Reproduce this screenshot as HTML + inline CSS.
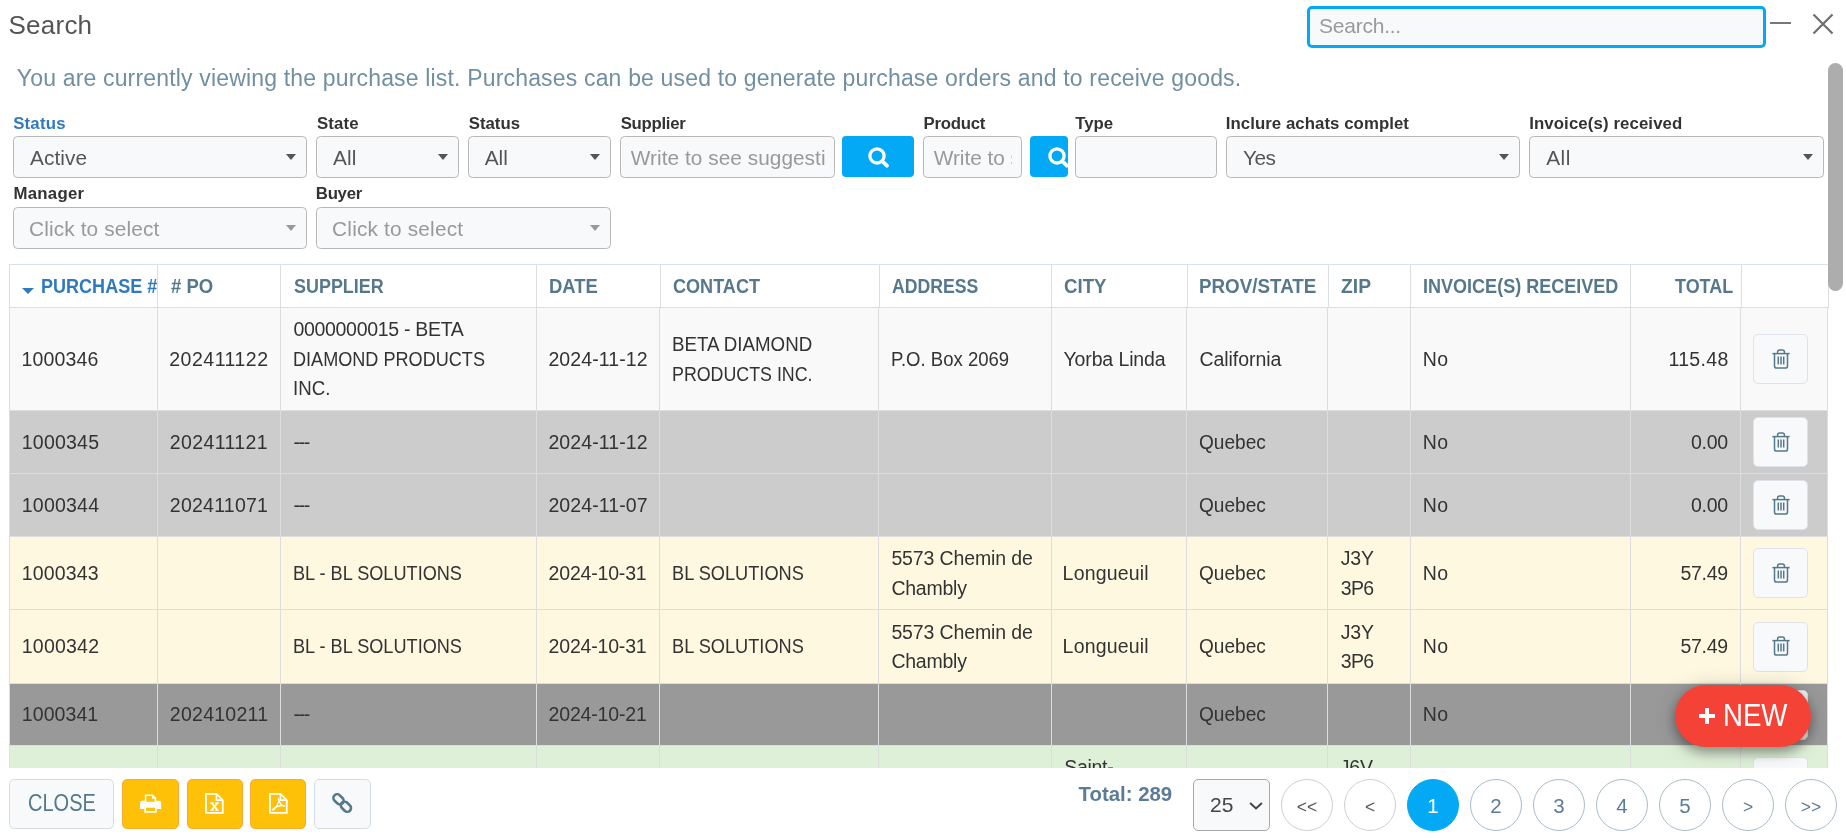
<!DOCTYPE html>
<html>
<head>
<meta charset="utf-8">
<title>Search</title>
<style>
*{box-sizing:border-box;}
html,body{margin:0;padding:0;}
body{width:1846px;height:838px;overflow:hidden;position:relative;background:#fff;will-change:transform;font-family:"Liberation Sans",sans-serif;color:#333;}
.abs{position:absolute;white-space:nowrap;}
#title{left:9px;top:10px;font-size:26px;line-height:30px;color:#555;}
#hsearch{left:1307px;top:6px;width:459px;height:42px;border:3px solid #03a9f4;border-radius:5px;background:#f8f9fa;}
#hsearch span{position:absolute;left:9px;top:5px;font-size:21px;line-height:24px;color:#9a9a9a;}
#min{left:1770px;top:22px;width:21px;height:2px;background:#777;}
#info{left:16px;top:62.8px;font-size:23px;line-height:30px;color:#7090a2;}
.lbl{font-size:16.8px;font-weight:bold;line-height:20px;color:#333;}
.sel{height:42px;border:1px solid #b8b8b8;border-radius:4.5px;background:#f8f9fa;font-size:20.8px;line-height:40px;color:#555;padding-left:16px;padding-top:1px;}
.sel.ph{color:#999;}
.sel i{position:absolute;right:10px;top:17px;width:0;height:0;border-left:5.5px solid transparent;border-right:5.5px solid transparent;border-top:6px solid #555;}
.sel.ph i{border-top-color:#999;}
.inp{height:42px;border:1px solid #b8b8b8;border-radius:4.5px;background:#f8f9fa;font-size:20.8px;line-height:40px;color:#999;padding-left:10px;padding-right:9px;padding-top:1px;overflow:hidden;}
.clip{overflow:hidden;width:100%;height:40px;}
.bbtn{background:#03a9f4;border-radius:4px;height:41px;}

#tbl{font-size:19.5px;line-height:29.6px;color:#333;}
#tbl .th,#tbl .td{position:absolute;border-left:1px solid #ddd;border-top:1px solid #ddd;padding:0 0 0 12px;display:flex;align-items:center;white-space:nowrap;}
#tbl .th{font-weight:bold;font-size:19.5px;color:#55788c;background:#fff;border-color:#dcdfe2;border-top:none;padding-top:2.2px;}
#tbl .th.sorted{color:#2f7abf;overflow:hidden;}
#tbl .r{justify-content:flex-end;padding-right:12px;padding-left:0;}
#tbl .caret{display:inline-block;width:0;height:0;border-left:6px solid transparent;border-right:6px solid transparent;border-top:6.5px solid #2f7abf;margin:9px 7px 0 0;}
#tbl .hline{position:absolute;height:1px;background:#d5e3ea;}
#tbl .vline{position:absolute;width:1px;background:#ddd;}
#tbl .t{display:block;position:relative;top:0.7px;}
#tbl .ln{display:block;}
.trash{display:flex;align-items:center;justify-content:center;width:55px;height:50px;padding-bottom:1px;border:1px solid #dde3e8;border-radius:5px;background:#f8f9fa;}

#newbtn{left:1675px;top:685px;width:136px;height:62px;border-radius:31px;background:#f44336;box-shadow:0 5px 12px rgba(0,0,0,.32),0 3px 22px rgba(0,0,0,.2);color:#fff;}
#newbtn .pl{position:absolute;left:24px;top:23px;width:16px;height:16px;}
#newbtn .pl:before{content:"";position:absolute;left:0;top:6px;width:16px;height:4.4px;background:#fff;}
#newbtn .pl:after{content:"";position:absolute;left:5.8px;top:0;width:4.4px;height:16px;background:#fff;}
#newbtn span{position:absolute;left:47.5px;top:13px;font-size:30.5px;line-height:34px;transform:scaleX(0.905);transform-origin:0 50%;}
#foot{left:0;top:768px;width:1846px;height:70px;background:#fff;}
.fb{position:absolute;top:11px;height:50px;border-radius:5px;}
.fb.y{background:#ffc107;border:1px solid #f7a93a;}
.fb.g{background:#f8f9fa;border:1px solid #d5dde2;}
.fb svg{position:absolute;}
#closet{position:absolute;left:18px;top:10px;font-size:23px;line-height:26px;color:#55788c;transform:scaleX(0.87);transform-origin:0 50%;}
#total{left:1078.5px;top:781.6px;font-size:20.4px;line-height:24px;font-weight:bold;color:#5b7c99;}
#psel{left:1193px;top:779px;width:77px;height:52px;border:1px solid #a8a8a8;border-radius:5px;background:#f8f9fa;font-size:21px;line-height:50px;color:#444;padding-left:16px;}
.pg{position:absolute;top:779px;width:52px;height:52px;border-radius:26px;border:1px solid #a9bcc8;background:#fff;text-align:center;font-size:20.5px;line-height:51px;color:#5b7c99;white-space:nowrap;}
.pg .ch{font-size:17.5px;position:relative;top:-0.5px;}
.pg.d{border-color:#d0d0d0;color:#555;}
.pg.a{background:#03a9f4;border-color:#03a9f4;color:#fff;}
#sbar{left:1828px;top:63px;width:15px;height:228px;border-radius:8px;background:#adadad;}
/*FIT*/
#l1{letter-spacing:0.20px;margin-left:0.20px;}
#l2{letter-spacing:0.18px;margin-left:0.90px;}
#l3{letter-spacing:0.02px;margin-left:0.70px;}
#l4{letter-spacing:-0.29px;margin-left:0.70px;}
#l5{letter-spacing:-0.25px;margin-left:0.50px;}
#l6{letter-spacing:-0.03px;margin-left:0.30px;}
#l7{letter-spacing:0.06px;margin-left:-0.20px;}
#l8{letter-spacing:0.11px;margin-left:0.20px;}
#l9{letter-spacing:0.25px;margin-left:0.50px;}
#l10{letter-spacing:-0.29px;margin-left:-0.20px;}
#s1{letter-spacing:0.10px;margin-left:0.00px;}
#s2{letter-spacing:0.10px;margin-left:0.10px;}
#s3{letter-spacing:0.05px;margin-left:-0.30px;}
#s4{letter-spacing:-0.60px;margin-left:0.10px;}
#s5{letter-spacing:0.50px;margin-left:0.20px;}
#s6{letter-spacing:0.14px;margin-left:-1.00px;}
#s7{letter-spacing:0.19px;margin-left:-0.90px;}
#i1{letter-spacing:0.05px;margin-left:-0.30px;}
#i2{letter-spacing:-0.03px;margin-left:-0.30px;}
#ttl{letter-spacing:0.24px;margin-left:-0.50px;}
#inf{letter-spacing:0.17px;margin-left:0.80px;}
#hs{letter-spacing:-0.23px;margin-left:-0.00px;}
/*ENDFIT*/
</style>
</head>
<body>
<div class="abs" id="title"><span id="ttl">Search</span></div>
<div class="abs" id="hsearch"><span id="hs">Search...</span></div>
<div class="abs" id="min"></div>
<svg class="abs" style="left:1811px;top:12px" width="24" height="24" viewBox="0 0 24 24"><path d="M2.5 2.5 L21.5 21.5 M21.5 2.5 L2.5 21.5" stroke="#6e6e6e" stroke-width="2.2" fill="none"/></svg>
<div class="abs" id="info"><span id="inf">You are currently viewing the purchase list. Purchases can be used to generate purchase orders and to receive goods.</span></div>

<!-- filters row 1 -->
<div class="abs lbl" style="left:13px;top:113.5px;color:#2f7abf"><span id="l1">Status</span></div>
<div class="abs sel" style="left:13px;top:136px;width:294px"><span id="s1">Active</span><i></i></div>
<div class="abs lbl" style="left:316px;top:113.5px"><span id="l2">State</span></div>
<div class="abs sel" style="left:316px;top:136px;width:143px"><span id="s2">All</span><i></i></div>
<div class="abs lbl" style="left:468px;top:113.5px"><span id="l3">Status</span></div>
<div class="abs sel" style="left:468px;top:136px;width:143px"><span id="s3">All</span><i></i></div>
<div class="abs lbl" style="left:620px;top:113.5px"><span id="l4">Supplier</span></div>
<div class="abs inp" style="left:620px;top:136px;width:215px"><div class="clip"><span id="i1">Write to see suggesti</span></div></div>
<div class="abs bbtn" style="left:842px;top:136px;width:72px"><svg style="position:absolute;left:26px;top:11px" width="22" height="21" viewBox="0 0 22 21"><g fill="none" stroke="#fff"><circle cx="9" cy="8.9" r="7.1" stroke-width="3.3"/><path d="M14.4 14.3L18.9 18.7" stroke-width="3.8" stroke-linecap="round"/></g></svg></div>
<div class="abs lbl" style="left:923px;top:113.5px"><span id="l5">Product</span></div>
<div class="abs inp" style="left:923px;top:136px;width:99px"><div class="clip"><span id="i2">Write to</span> s</div></div>
<div class="abs bbtn" style="left:1030px;top:136px;width:38px;border-radius:4px;overflow:hidden"><svg style="position:absolute;left:17.8px;top:11px" width="22" height="21" viewBox="0 0 22 21"><g fill="none" stroke="#fff"><circle cx="9" cy="8.9" r="7.1" stroke-width="3.3"/><path d="M14.4 14.3L18.9 18.7" stroke-width="3.8" stroke-linecap="round"/></g></svg></div>
<div class="abs lbl" style="left:1075px;top:113.5px"><span id="l6">Type</span></div>
<div class="abs inp" style="left:1075px;top:136px;width:142px"></div>
<div class="abs lbl" style="left:1226px;top:113.5px"><span id="l7">Inclure achats complet</span></div>
<div class="abs sel" style="left:1226px;top:136px;width:294px"><span id="s4">Yes</span><i></i></div>
<div class="abs lbl" style="left:1529px;top:113.5px"><span id="l8">Invoice(s) received</span></div>
<div class="abs sel" style="left:1529px;top:136px;width:295px"><span id="s5">All</span><i></i></div>
<!-- filters row 2 -->
<div class="abs lbl" style="left:13px;top:183.5px"><span id="l9">Manager</span></div>
<div class="abs sel ph" style="left:13px;top:207px;width:294px"><span id="s6">Click to select</span><i></i></div>
<div class="abs lbl" style="left:316px;top:183.5px"><span id="l10">Buyer</span></div>
<div class="abs sel ph" style="left:316px;top:207px;width:295px"><span id="s7">Click to select</span><i></i></div>

<!--TABLE-->
<div class="abs" id="tbl" style="left:0;top:264px;width:1846px;height:504px;overflow:hidden">
<div class="th sorted" style="left:9px;top:0;width:148px;height:43px"><i class="caret"></i><span class="ln" id="h1" style="letter-spacing:0.00px;transform:scaleX(0.9250);transform-origin:0 50%;margin-left:-0.30px;">PURCHASE #</span></div>
<div class="th" style="left:157px;top:0;width:123px;height:43px"><span class="ln" id="h2" style="letter-spacing:0.00px;transform:scaleX(0.9498);transform-origin:0 50%;margin-left:0.70px;"># PO</span></div>
<div class="th" style="left:280px;top:0;width:256px;height:43px"><span class="ln" id="h3" style="letter-spacing:0.00px;transform:scaleX(0.9199);transform-origin:0 50%;margin-left:1.00px;">SUPPLIER</span></div>
<div class="th" style="left:536px;top:0;width:124px;height:43px"><span class="ln" id="h4" style="letter-spacing:0.00px;transform:scaleX(0.9471);transform-origin:0 50%;margin-left:-0.00px;">DATE</span></div>
<div class="th" style="left:660px;top:0;width:219px;height:43px"><span class="ln" id="h5" style="letter-spacing:0.00px;transform:scaleX(0.9266);transform-origin:0 50%;margin-left:0.00px;">CONTACT</span></div>
<div class="th" style="left:879px;top:0;width:172px;height:43px"><span class="ln" id="h6" style="letter-spacing:0.00px;transform:scaleX(0.9049);transform-origin:0 50%;margin-left:0.00px;">ADDRESS</span></div>
<div class="th" style="left:1051px;top:0;width:136px;height:43px"><span class="ln" id="h7" style="letter-spacing:0.00px;transform:scaleX(0.9569);transform-origin:0 50%;margin-left:0.00px;">CITY</span></div>
<div class="th" style="left:1187px;top:0;width:141px;height:43px"><span class="ln" id="h8" style="letter-spacing:0.00px;transform:scaleX(0.9642);transform-origin:0 50%;margin-left:-1.00px;">PROV/STATE</span></div>
<div class="th" style="left:1328px;top:0;width:82px;height:43px"><span class="ln" id="h9" style="letter-spacing:0.00px;transform:scaleX(0.9899);transform-origin:0 50%;margin-left:0.20px;">ZIP</span></div>
<div class="th" style="left:1410px;top:0;width:220px;height:43px"><span class="ln" id="h10" style="letter-spacing:0.00px;transform:scaleX(0.9246);transform-origin:0 50%;margin-left:0.00px;">INVOICE(S) RECEIVED</span></div>
<div class="th r" style="left:1630px;top:0;width:111px;height:43px"><span class="ln" id="h11" style="letter-spacing:0.00px;transform:scaleX(0.9212);transform-origin:100% 50%;margin-right:-4.00px;">TOTAL</span></div>
<div class="th" style="left:1741px;top:0;width:87px;height:43px"></div>
<div class="hline" style="left:9px;top:0;width:1820px"></div>
<div class="vline" style="left:1828px;top:0;height:44px"></div>
<div class="td" style="left:9px;top:43px;width:148px;height:103px;background:#f9f9f9;border-color:#dddddd"><div class="t"><span class="ln" id="r1c1l1" style="letter-spacing:0.17px;margin-left:-0.60px;">1000346</span></div></div>
<div class="td" style="left:157px;top:43px;width:123px;height:103px;background:#f9f9f9;border-color:#dddddd"><div class="t"><span class="ln" id="r1c2l1" style="letter-spacing:0.52px;margin-left:-0.80px;">202411122</span></div></div>
<div class="td" style="left:280px;top:43px;width:256px;height:103px;background:#f9f9f9;border-color:#dddddd"><div class="t"><span class="ln" id="r1c3l1" style="letter-spacing:-0.30px;margin-left:0.40px;">0000000015 - BETA</span><span class="ln" id="r1c3l2" style="letter-spacing:0.00px;transform:scaleX(0.9276);transform-origin:0 50%;margin-left:0.20px;">DIAMOND PRODUCTS</span><span class="ln" id="r1c3l3" style="letter-spacing:0.00px;transform:scaleX(0.9574);transform-origin:0 50%;margin-left:0.20px;">INC.</span></div></div>
<div class="td" style="left:536px;top:43px;width:123px;height:103px;background:#f9f9f9;border-color:#dddddd"><div class="t"><span class="ln" id="r1c4l1" style="letter-spacing:0.09px;margin-left:-0.60px;">2024-11-12</span></div></div>
<div class="td" style="left:659px;top:43px;width:219px;height:103px;background:#f9f9f9;border-color:#dddddd"><div class="t"><span class="ln" id="r1c5l1" style="letter-spacing:0.00px;transform:scaleX(0.9613);transform-origin:0 50%;margin-left:0.20px;">BETA DIAMOND</span><span class="ln" id="r1c5l2" style="letter-spacing:0.00px;transform:scaleX(0.9136);transform-origin:0 50%;margin-left:0.20px;">PRODUCTS INC.</span></div></div>
<div class="td" style="left:878px;top:43px;width:173px;height:103px;background:#f9f9f9;border-color:#dddddd"><div class="t"><span class="ln" id="r1c6l1" style="letter-spacing:0.00px;transform:scaleX(0.9505);transform-origin:0 50%;margin-left:0.20px;">P.O. Box 2069</span></div></div>
<div class="td" style="left:1051px;top:43px;width:135px;height:103px;background:#f9f9f9;border-color:#dddddd"><div class="t"><span class="ln" id="r1c7l1" style="letter-spacing:-0.11px;margin-left:-0.60px;">Yorba Linda</span></div></div>
<div class="td" style="left:1186px;top:43px;width:141px;height:103px;background:#f9f9f9;border-color:#dddddd"><div class="t"><span class="ln" id="r1c8l1" style="letter-spacing:-0.08px;margin-left:0.60px;">California</span></div></div>
<div class="td" style="left:1327px;top:43px;width:83px;height:103px;background:#f9f9f9;border-color:#dddddd"></div>
<div class="td" style="left:1410px;top:43px;width:220px;height:103px;background:#f9f9f9;border-color:#dddddd"><div class="t"><span class="ln" id="r1c10l1" style="letter-spacing:0.40px;margin-left:-0.30px;">No</span></div></div>
<div class="td r" style="left:1630px;top:43px;width:110px;height:103px;background:#f9f9f9;border-color:#dddddd"><div class="t"><span class="ln" id="r1c11l1" style="letter-spacing:0.36px;margin-right:-0.76px;">115.48</span></div></div>
<div class="td" style="left:1740px;top:43px;width:88px;height:103px;background:#f9f9f9;border-color:#dddddd"><b class="trash"><svg width="18" height="20" viewBox="0 0 18 20"><g fill="none" stroke="#55788c" stroke-width="1.5"><path d="M0.4 4.6H17.6"/><path d="M5.6 4.4V3Q5.6 1 7.6 1H10.4Q12.4 1 12.4 3V4.4"/><path d="M2.5 4.8V17Q2.5 19.1 4.6 19.1H13.4Q15.5 19.1 15.5 17V4.8"/><path d="M6.3 7.6V15.6M9 7.6V15.6M11.7 7.6V15.6"/></g></svg></b></div>
<div class="vline" style="left:1827px;top:43px;height:103px;background:#dddddd"></div>
<div class="td" style="left:9px;top:146px;width:148px;height:63px;background:#cccccc;border-color:#dddddd"><div class="t"><span class="ln" id="r2c1l1" style="letter-spacing:0.21px;margin-left:-0.20px;">1000345</span></div></div>
<div class="td" style="left:157px;top:146px;width:123px;height:63px;background:#cccccc;border-color:#dddddd"><div class="t"><span class="ln" id="r2c2l1" style="letter-spacing:0.39px;margin-left:-0.20px;">202411121</span></div></div>
<div class="td" style="left:280px;top:146px;width:256px;height:63px;background:#cccccc;border-color:#dddddd"><div class="t"><span class="ln" id="r2c3l1" style="letter-spacing:-1.30px;margin-left:0.40px;">---</span></div></div>
<div class="td" style="left:536px;top:146px;width:123px;height:63px;background:#cccccc;border-color:#dddddd"><div class="t"><span class="ln" id="r2c4l1" style="letter-spacing:0.09px;margin-left:-0.60px;">2024-11-12</span></div></div>
<div class="td" style="left:659px;top:146px;width:219px;height:63px;background:#cccccc;border-color:#dddddd"></div>
<div class="td" style="left:878px;top:146px;width:173px;height:63px;background:#cccccc;border-color:#dddddd"></div>
<div class="td" style="left:1051px;top:146px;width:135px;height:63px;background:#cccccc;border-color:#dddddd"></div>
<div class="td" style="left:1186px;top:146px;width:141px;height:63px;background:#cccccc;border-color:#dddddd"><div class="t"><span class="ln" id="r2c8l1" style="letter-spacing:0.00px;transform:scaleX(0.9781);transform-origin:0 50%;margin-left:0.30px;">Quebec</span></div></div>
<div class="td" style="left:1327px;top:146px;width:83px;height:63px;background:#cccccc;border-color:#dddddd"></div>
<div class="td" style="left:1410px;top:146px;width:220px;height:63px;background:#cccccc;border-color:#dddddd"><div class="t"><span class="ln" id="r2c10l1" style="letter-spacing:0.40px;margin-left:-0.30px;">No</span></div></div>
<div class="td r" style="left:1630px;top:146px;width:110px;height:63px;background:#cccccc;border-color:#dddddd"><div class="t"><span class="ln" id="r2c11l1" style="letter-spacing:-0.33px;margin-right:0.33px;">0.00</span></div></div>
<div class="td" style="left:1740px;top:146px;width:88px;height:63px;background:#cccccc;border-color:#dddddd"><b class="trash"><svg width="18" height="20" viewBox="0 0 18 20"><g fill="none" stroke="#55788c" stroke-width="1.5"><path d="M0.4 4.6H17.6"/><path d="M5.6 4.4V3Q5.6 1 7.6 1H10.4Q12.4 1 12.4 3V4.4"/><path d="M2.5 4.8V17Q2.5 19.1 4.6 19.1H13.4Q15.5 19.1 15.5 17V4.8"/><path d="M6.3 7.6V15.6M9 7.6V15.6M11.7 7.6V15.6"/></g></svg></b></div>
<div class="vline" style="left:1827px;top:146px;height:63px;background:#dddddd"></div>
<div class="td" style="left:9px;top:209px;width:148px;height:63px;background:#cccccc;border-color:#dddddd"><div class="t"><span class="ln" id="r3c1l1" style="letter-spacing:0.21px;margin-left:-0.20px;">1000344</span></div></div>
<div class="td" style="left:157px;top:209px;width:123px;height:63px;background:#cccccc;border-color:#dddddd"><div class="t"><span class="ln" id="r3c2l1" style="letter-spacing:0.24px;margin-left:-0.20px;">202411071</span></div></div>
<div class="td" style="left:280px;top:209px;width:256px;height:63px;background:#cccccc;border-color:#dddddd"><div class="t"><span class="ln" id="r3c3l1" style="letter-spacing:-1.30px;margin-left:0.40px;">---</span></div></div>
<div class="td" style="left:536px;top:209px;width:123px;height:63px;background:#cccccc;border-color:#dddddd"><div class="t"><span class="ln" id="r3c4l1" style="letter-spacing:0.09px;margin-left:-0.60px;">2024-11-07</span></div></div>
<div class="td" style="left:659px;top:209px;width:219px;height:63px;background:#cccccc;border-color:#dddddd"></div>
<div class="td" style="left:878px;top:209px;width:173px;height:63px;background:#cccccc;border-color:#dddddd"></div>
<div class="td" style="left:1051px;top:209px;width:135px;height:63px;background:#cccccc;border-color:#dddddd"></div>
<div class="td" style="left:1186px;top:209px;width:141px;height:63px;background:#cccccc;border-color:#dddddd"><div class="t"><span class="ln" id="r3c8l1" style="letter-spacing:0.00px;transform:scaleX(0.9781);transform-origin:0 50%;margin-left:0.30px;">Quebec</span></div></div>
<div class="td" style="left:1327px;top:209px;width:83px;height:63px;background:#cccccc;border-color:#dddddd"></div>
<div class="td" style="left:1410px;top:209px;width:220px;height:63px;background:#cccccc;border-color:#dddddd"><div class="t"><span class="ln" id="r3c10l1" style="letter-spacing:0.40px;margin-left:-0.30px;">No</span></div></div>
<div class="td r" style="left:1630px;top:209px;width:110px;height:63px;background:#cccccc;border-color:#dddddd"><div class="t"><span class="ln" id="r3c11l1" style="letter-spacing:-0.33px;margin-right:0.33px;">0.00</span></div></div>
<div class="td" style="left:1740px;top:209px;width:88px;height:63px;background:#cccccc;border-color:#dddddd"><b class="trash"><svg width="18" height="20" viewBox="0 0 18 20"><g fill="none" stroke="#55788c" stroke-width="1.5"><path d="M0.4 4.6H17.6"/><path d="M5.6 4.4V3Q5.6 1 7.6 1H10.4Q12.4 1 12.4 3V4.4"/><path d="M2.5 4.8V17Q2.5 19.1 4.6 19.1H13.4Q15.5 19.1 15.5 17V4.8"/><path d="M6.3 7.6V15.6M9 7.6V15.6M11.7 7.6V15.6"/></g></svg></b></div>
<div class="vline" style="left:1827px;top:209px;height:63px;background:#dddddd"></div>
<div class="td" style="left:9px;top:272px;width:148px;height:73px;background:#fff8e1;border-color:#dddddd"><div class="t"><span class="ln" id="r4c1l1" style="letter-spacing:0.15px;margin-left:-0.20px;">1000343</span></div></div>
<div class="td" style="left:157px;top:272px;width:123px;height:73px;background:#fff8e1;border-color:#dddddd"></div>
<div class="td" style="left:280px;top:272px;width:256px;height:73px;background:#fff8e1;border-color:#dddddd"><div class="t"><span class="ln" id="r4c3l1" style="letter-spacing:0.00px;transform:scaleX(0.9300);transform-origin:0 50%;margin-left:-0.20px;">BL - BL SOLUTIONS</span></div></div>
<div class="td" style="left:536px;top:272px;width:123px;height:73px;background:#fff8e1;border-color:#dddddd"><div class="t"><span class="ln" id="r4c4l1" style="letter-spacing:-0.19px;margin-left:-0.40px;">2024-10-31</span></div></div>
<div class="td" style="left:659px;top:272px;width:219px;height:73px;background:#fff8e1;border-color:#dddddd"><div class="t"><span class="ln" id="r4c5l1" style="letter-spacing:0.00px;transform:scaleX(0.9335);transform-origin:0 50%;margin-left:-0.40px;">BL SOLUTIONS</span></div></div>
<div class="td" style="left:878px;top:272px;width:173px;height:73px;background:#fff8e1;border-color:#dddddd"><div class="t"><span class="ln" id="r4c6l1" style="letter-spacing:-0.13px;margin-left:0.40px;">5573 Chemin de</span><span class="ln" id="r4c6l2" style="letter-spacing:-0.23px;margin-left:0.40px;">Chambly</span></div></div>
<div class="td" style="left:1051px;top:272px;width:135px;height:73px;background:#fff8e1;border-color:#dddddd"><div class="t"><span class="ln" id="r4c7l1" style="letter-spacing:0.18px;margin-left:-1.40px;">Longueuil</span></div></div>
<div class="td" style="left:1186px;top:272px;width:141px;height:73px;background:#fff8e1;border-color:#dddddd"><div class="t"><span class="ln" id="r4c8l1" style="letter-spacing:0.00px;transform:scaleX(0.9776);transform-origin:0 50%;margin-left:0.30px;">Quebec</span></div></div>
<div class="td" style="left:1327px;top:272px;width:83px;height:73px;background:#fff8e1;border-color:#dddddd"><div class="t"><span class="ln" id="r4c9l1" style="letter-spacing:-0.20px;margin-left:0.80px;">J3Y</span><span class="ln" id="r4c9l2" style="letter-spacing:-0.70px;margin-left:0.80px;">3P6</span></div></div>
<div class="td" style="left:1410px;top:272px;width:220px;height:73px;background:#fff8e1;border-color:#dddddd"><div class="t"><span class="ln" id="r4c10l1" style="letter-spacing:0.40px;margin-left:-0.30px;">No</span></div></div>
<div class="td r" style="left:1630px;top:272px;width:110px;height:73px;background:#fff8e1;border-color:#dddddd"><div class="t"><span class="ln" id="r4c11l1" style="letter-spacing:-0.25px;margin-right:0.05px;">57.49</span></div></div>
<div class="td" style="left:1740px;top:272px;width:88px;height:73px;background:#fff8e1;border-color:#dddddd"><b class="trash"><svg width="18" height="20" viewBox="0 0 18 20"><g fill="none" stroke="#55788c" stroke-width="1.5"><path d="M0.4 4.6H17.6"/><path d="M5.6 4.4V3Q5.6 1 7.6 1H10.4Q12.4 1 12.4 3V4.4"/><path d="M2.5 4.8V17Q2.5 19.1 4.6 19.1H13.4Q15.5 19.1 15.5 17V4.8"/><path d="M6.3 7.6V15.6M9 7.6V15.6M11.7 7.6V15.6"/></g></svg></b></div>
<div class="vline" style="left:1827px;top:272px;height:73px;background:#dddddd"></div>
<div class="td" style="left:9px;top:345px;width:148px;height:74px;background:#fff8e1;border-color:#dddddd"><div class="t"><span class="ln" id="r5c1l1" style="letter-spacing:0.21px;margin-left:-0.20px;">1000342</span></div></div>
<div class="td" style="left:157px;top:345px;width:123px;height:74px;background:#fff8e1;border-color:#dddddd"></div>
<div class="td" style="left:280px;top:345px;width:256px;height:74px;background:#fff8e1;border-color:#dddddd"><div class="t"><span class="ln" id="r5c3l1" style="letter-spacing:0.00px;transform:scaleX(0.9300);transform-origin:0 50%;margin-left:-0.20px;">BL - BL SOLUTIONS</span></div></div>
<div class="td" style="left:536px;top:345px;width:123px;height:74px;background:#fff8e1;border-color:#dddddd"><div class="t"><span class="ln" id="r5c4l1" style="letter-spacing:-0.19px;margin-left:-0.40px;">2024-10-31</span></div></div>
<div class="td" style="left:659px;top:345px;width:219px;height:74px;background:#fff8e1;border-color:#dddddd"><div class="t"><span class="ln" id="r5c5l1" style="letter-spacing:0.00px;transform:scaleX(0.9335);transform-origin:0 50%;margin-left:-0.40px;">BL SOLUTIONS</span></div></div>
<div class="td" style="left:878px;top:345px;width:173px;height:74px;background:#fff8e1;border-color:#dddddd"><div class="t"><span class="ln" id="r5c6l1" style="letter-spacing:-0.13px;margin-left:0.40px;">5573 Chemin de</span><span class="ln" id="r5c6l2" style="letter-spacing:-0.23px;margin-left:0.40px;">Chambly</span></div></div>
<div class="td" style="left:1051px;top:345px;width:135px;height:74px;background:#fff8e1;border-color:#dddddd"><div class="t"><span class="ln" id="r5c7l1" style="letter-spacing:0.18px;margin-left:-1.40px;">Longueuil</span></div></div>
<div class="td" style="left:1186px;top:345px;width:141px;height:74px;background:#fff8e1;border-color:#dddddd"><div class="t"><span class="ln" id="r5c8l1" style="letter-spacing:0.00px;transform:scaleX(0.9776);transform-origin:0 50%;margin-left:0.30px;">Quebec</span></div></div>
<div class="td" style="left:1327px;top:345px;width:83px;height:74px;background:#fff8e1;border-color:#dddddd"><div class="t"><span class="ln" id="r5c9l1" style="letter-spacing:-0.20px;margin-left:0.80px;">J3Y</span><span class="ln" id="r5c9l2" style="letter-spacing:-0.70px;margin-left:0.80px;">3P6</span></div></div>
<div class="td" style="left:1410px;top:345px;width:220px;height:74px;background:#fff8e1;border-color:#dddddd"><div class="t"><span class="ln" id="r5c10l1" style="letter-spacing:0.40px;margin-left:-0.30px;">No</span></div></div>
<div class="td r" style="left:1630px;top:345px;width:110px;height:74px;background:#fff8e1;border-color:#dddddd"><div class="t"><span class="ln" id="r5c11l1" style="letter-spacing:-0.25px;margin-right:0.05px;">57.49</span></div></div>
<div class="td" style="left:1740px;top:345px;width:88px;height:74px;background:#fff8e1;border-color:#dddddd"><b class="trash"><svg width="18" height="20" viewBox="0 0 18 20"><g fill="none" stroke="#55788c" stroke-width="1.5"><path d="M0.4 4.6H17.6"/><path d="M5.6 4.4V3Q5.6 1 7.6 1H10.4Q12.4 1 12.4 3V4.4"/><path d="M2.5 4.8V17Q2.5 19.1 4.6 19.1H13.4Q15.5 19.1 15.5 17V4.8"/><path d="M6.3 7.6V15.6M9 7.6V15.6M11.7 7.6V15.6"/></g></svg></b></div>
<div class="vline" style="left:1827px;top:345px;height:74px;background:#dddddd"></div>
<div class="td" style="left:9px;top:419px;width:148px;height:62px;background:#999999;border-color:#dddddd"><div class="t"><span class="ln" id="r6c1l1" style="letter-spacing:0.08px;margin-left:-0.20px;">1000341</span></div></div>
<div class="td" style="left:157px;top:419px;width:123px;height:62px;background:#999999;border-color:#dddddd"><div class="t"><span class="ln" id="r6c2l1" style="letter-spacing:0.26px;margin-left:-0.20px;">202410211</span></div></div>
<div class="td" style="left:280px;top:419px;width:256px;height:62px;background:#999999;border-color:#dddddd"><div class="t"><span class="ln" id="r6c3l1" style="letter-spacing:-1.30px;margin-left:0.40px;">---</span></div></div>
<div class="td" style="left:536px;top:419px;width:123px;height:62px;background:#999999;border-color:#dddddd"><div class="t"><span class="ln" id="r6c4l1" style="letter-spacing:-0.18px;margin-left:-0.40px;">2024-10-21</span></div></div>
<div class="td" style="left:659px;top:419px;width:219px;height:62px;background:#999999;border-color:#dddddd"></div>
<div class="td" style="left:878px;top:419px;width:173px;height:62px;background:#999999;border-color:#dddddd"></div>
<div class="td" style="left:1051px;top:419px;width:135px;height:62px;background:#999999;border-color:#dddddd"></div>
<div class="td" style="left:1186px;top:419px;width:141px;height:62px;background:#999999;border-color:#dddddd"><div class="t"><span class="ln" id="r6c8l1" style="letter-spacing:0.00px;transform:scaleX(0.9781);transform-origin:0 50%;margin-left:0.30px;">Quebec</span></div></div>
<div class="td" style="left:1327px;top:419px;width:83px;height:62px;background:#999999;border-color:#dddddd"></div>
<div class="td" style="left:1410px;top:419px;width:220px;height:62px;background:#999999;border-color:#dddddd"><div class="t"><span class="ln" id="r6c10l1" style="letter-spacing:0.40px;margin-left:-0.30px;">No</span></div></div>
<div class="td r" style="left:1630px;top:419px;width:110px;height:62px;background:#999999;border-color:#dddddd"></div>
<div class="td" style="left:1740px;top:419px;width:88px;height:62px;background:#999999;border-color:#dddddd"><b class="trash"><svg width="18" height="20" viewBox="0 0 18 20"><g fill="none" stroke="#55788c" stroke-width="1.5"><path d="M0.4 4.6H17.6"/><path d="M5.6 4.4V3Q5.6 1 7.6 1H10.4Q12.4 1 12.4 3V4.4"/><path d="M2.5 4.8V17Q2.5 19.1 4.6 19.1H13.4Q15.5 19.1 15.5 17V4.8"/><path d="M6.3 7.6V15.6M9 7.6V15.6M11.7 7.6V15.6"/></g></svg></b></div>
<div class="vline" style="left:1827px;top:419px;height:62px;background:#dddddd"></div>
<div class="td" style="left:9px;top:481px;width:148px;height:73px;background:#dff0d8;border-color:#dddddd"></div>
<div class="td" style="left:157px;top:481px;width:123px;height:73px;background:#dff0d8;border-color:#dddddd"></div>
<div class="td" style="left:280px;top:481px;width:256px;height:73px;background:#dff0d8;border-color:#dddddd"></div>
<div class="td" style="left:536px;top:481px;width:123px;height:73px;background:#dff0d8;border-color:#dddddd"></div>
<div class="td" style="left:659px;top:481px;width:219px;height:73px;background:#dff0d8;border-color:#dddddd"></div>
<div class="td" style="left:878px;top:481px;width:173px;height:73px;background:#dff0d8;border-color:#dddddd"></div>
<div class="td" style="left:1051px;top:481px;width:135px;height:73px;background:#dff0d8;border-color:#dddddd"><div class="t"><span class="ln" id="r7c7l1" style="letter-spacing:-0.30px;margin-left:0.20px;">Saint-</span><span class="ln" id="r7c7l2" style="">Lin</span></div></div>
<div class="td" style="left:1186px;top:481px;width:141px;height:73px;background:#dff0d8;border-color:#dddddd"></div>
<div class="td" style="left:1327px;top:481px;width:83px;height:73px;background:#dff0d8;border-color:#dddddd"><div class="t"><span class="ln" id="r7c9l1" style="letter-spacing:-0.20px;margin-left:-0.20px;">J6V</span><span class="ln" id="r7c9l2" style="">1A1</span></div></div>
<div class="td" style="left:1410px;top:481px;width:220px;height:73px;background:#dff0d8;border-color:#dddddd"></div>
<div class="td r" style="left:1630px;top:481px;width:110px;height:73px;background:#dff0d8;border-color:#dddddd"></div>
<div class="td" style="left:1740px;top:481px;width:88px;height:73px;background:#dff0d8;border-color:#dddddd"><b class="trash"><svg width="18" height="20" viewBox="0 0 18 20"><g fill="none" stroke="#55788c" stroke-width="1.5"><path d="M0.4 4.6H17.6"/><path d="M5.6 4.4V3Q5.6 1 7.6 1H10.4Q12.4 1 12.4 3V4.4"/><path d="M2.5 4.8V17Q2.5 19.1 4.6 19.1H13.4Q15.5 19.1 15.5 17V4.8"/><path d="M6.3 7.6V15.6M9 7.6V15.6M11.7 7.6V15.6"/></g></svg></b></div>
<div class="vline" style="left:1827px;top:481px;height:73px;background:#dddddd"></div>
</div>
<!--/TABLE-->
<!--FOOTER-->
<div class="abs" id="foot">
<div class="fb g" style="left:9px;width:105px"><span id="closet">CLOSE</span></div>
<div class="fb y" style="left:122px;width:57px"><svg style="left:17.4px;top:14.3px" width="21.2" height="19.3" viewBox="0 0 22 20"><g fill="#fff"><path d="M5 0.5H13.2L16.8 4V8H5Z"/><path d="M2.2 7H19.8Q22 7 22 9.2V15.5H17.5V12.5H4.5V15.5H0V9.2Q0 7 2.2 7Z"/><path d="M4.5 12.5H17.5V19.5H4.5Z M6.3 14.3V17.7H15.7V14.3Z" fill-rule="evenodd"/><path d="M6.6 2.1H12.4V5H15.2V8H6.6Z" fill="#ffc107"/></g></svg></div>
<div class="fb y" style="left:187px;width:56px"><svg style="left:17.4px;top:12.9px" width="19" height="20.9" viewBox="0 0 20 22"><g><path d="M1 1H12L18.7 7.5V21H1Z" fill="none" stroke="#fff" stroke-width="1.9"/><path d="M12 1V7.5H18.7" fill="none" stroke="#fff" stroke-width="1.6"/><path d="M5.5 10.5H9.2M10.8 10.5H14.5M5.5 18H9.2M10.8 18H14.5" stroke="#fff" stroke-width="1.4"/><path d="M7 10.5L13 18M13 10.5L7 18" stroke="#fff" stroke-width="2"/></g></svg></div>
<div class="fb y" style="left:250px;width:56px"><svg style="left:18px;top:12.9px" width="19" height="20.9" viewBox="0 0 20 22"><g><path d="M1 1H12L18.7 7.5V21H1Z" fill="none" stroke="#fff" stroke-width="1.9"/><path d="M12 1V7.5H18.7" fill="none" stroke="#fff" stroke-width="1.6"/><path d="M9.8 5.5Q10.5 10 13 12.5Q15 14.2 17 13.6M10.3 9Q8.5 14.5 4.8 17.8Q3.6 18.4 4 17.2Q6 14.5 14.5 13" fill="none" stroke="#fff" stroke-width="1.5"/></g></svg></div>
<div class="fb g" style="left:314px;width:57px"><svg style="left:17.4px;top:12.8px" width="21" height="21" viewBox="0 0 22 22"><g fill="none" stroke="#55788c" stroke-width="2.7"><rect x="-5.9" y="-3.9" width="11.8" height="7.8" rx="3.9" transform="translate(6.8 6.6) rotate(45)"/><rect x="-5.9" y="-3.9" width="11.8" height="7.8" rx="3.9" transform="translate(14.6 14.4) rotate(45)"/></g></svg></div>
</div>
<div class="abs" id="total">Total: 289</div>
<div class="abs" id="psel">25<svg style="position:absolute;left:55px;top:22px" width="14" height="8" viewBox="0 0 14 8"><path d="M1.1 1.1L7 6.5L12.9 1.1" fill="none" stroke="#444" stroke-width="2"/></svg></div>
<div class="pg d" style="left:1281px"><span class="ch">&lt;&lt;</span></div>
<div class="pg d" style="left:1344px"><span class="ch">&lt;</span></div>
<div class="pg a" style="left:1407px">1</div>
<div class="pg" style="left:1470px">2</div>
<div class="pg" style="left:1533px">3</div>
<div class="pg" style="left:1596px">4</div>
<div class="pg" style="left:1659px">5</div>
<div class="pg" style="left:1722px"><span class="ch">&gt;</span></div>
<div class="pg" style="left:1785px"><span class="ch">&gt;&gt;</span></div>
<div class="abs" id="newbtn"><i class="pl"></i><span>NEW</span></div>
<div class="abs" id="sbar"></div>
<!--/FOOTER-->
</body>
</html>
